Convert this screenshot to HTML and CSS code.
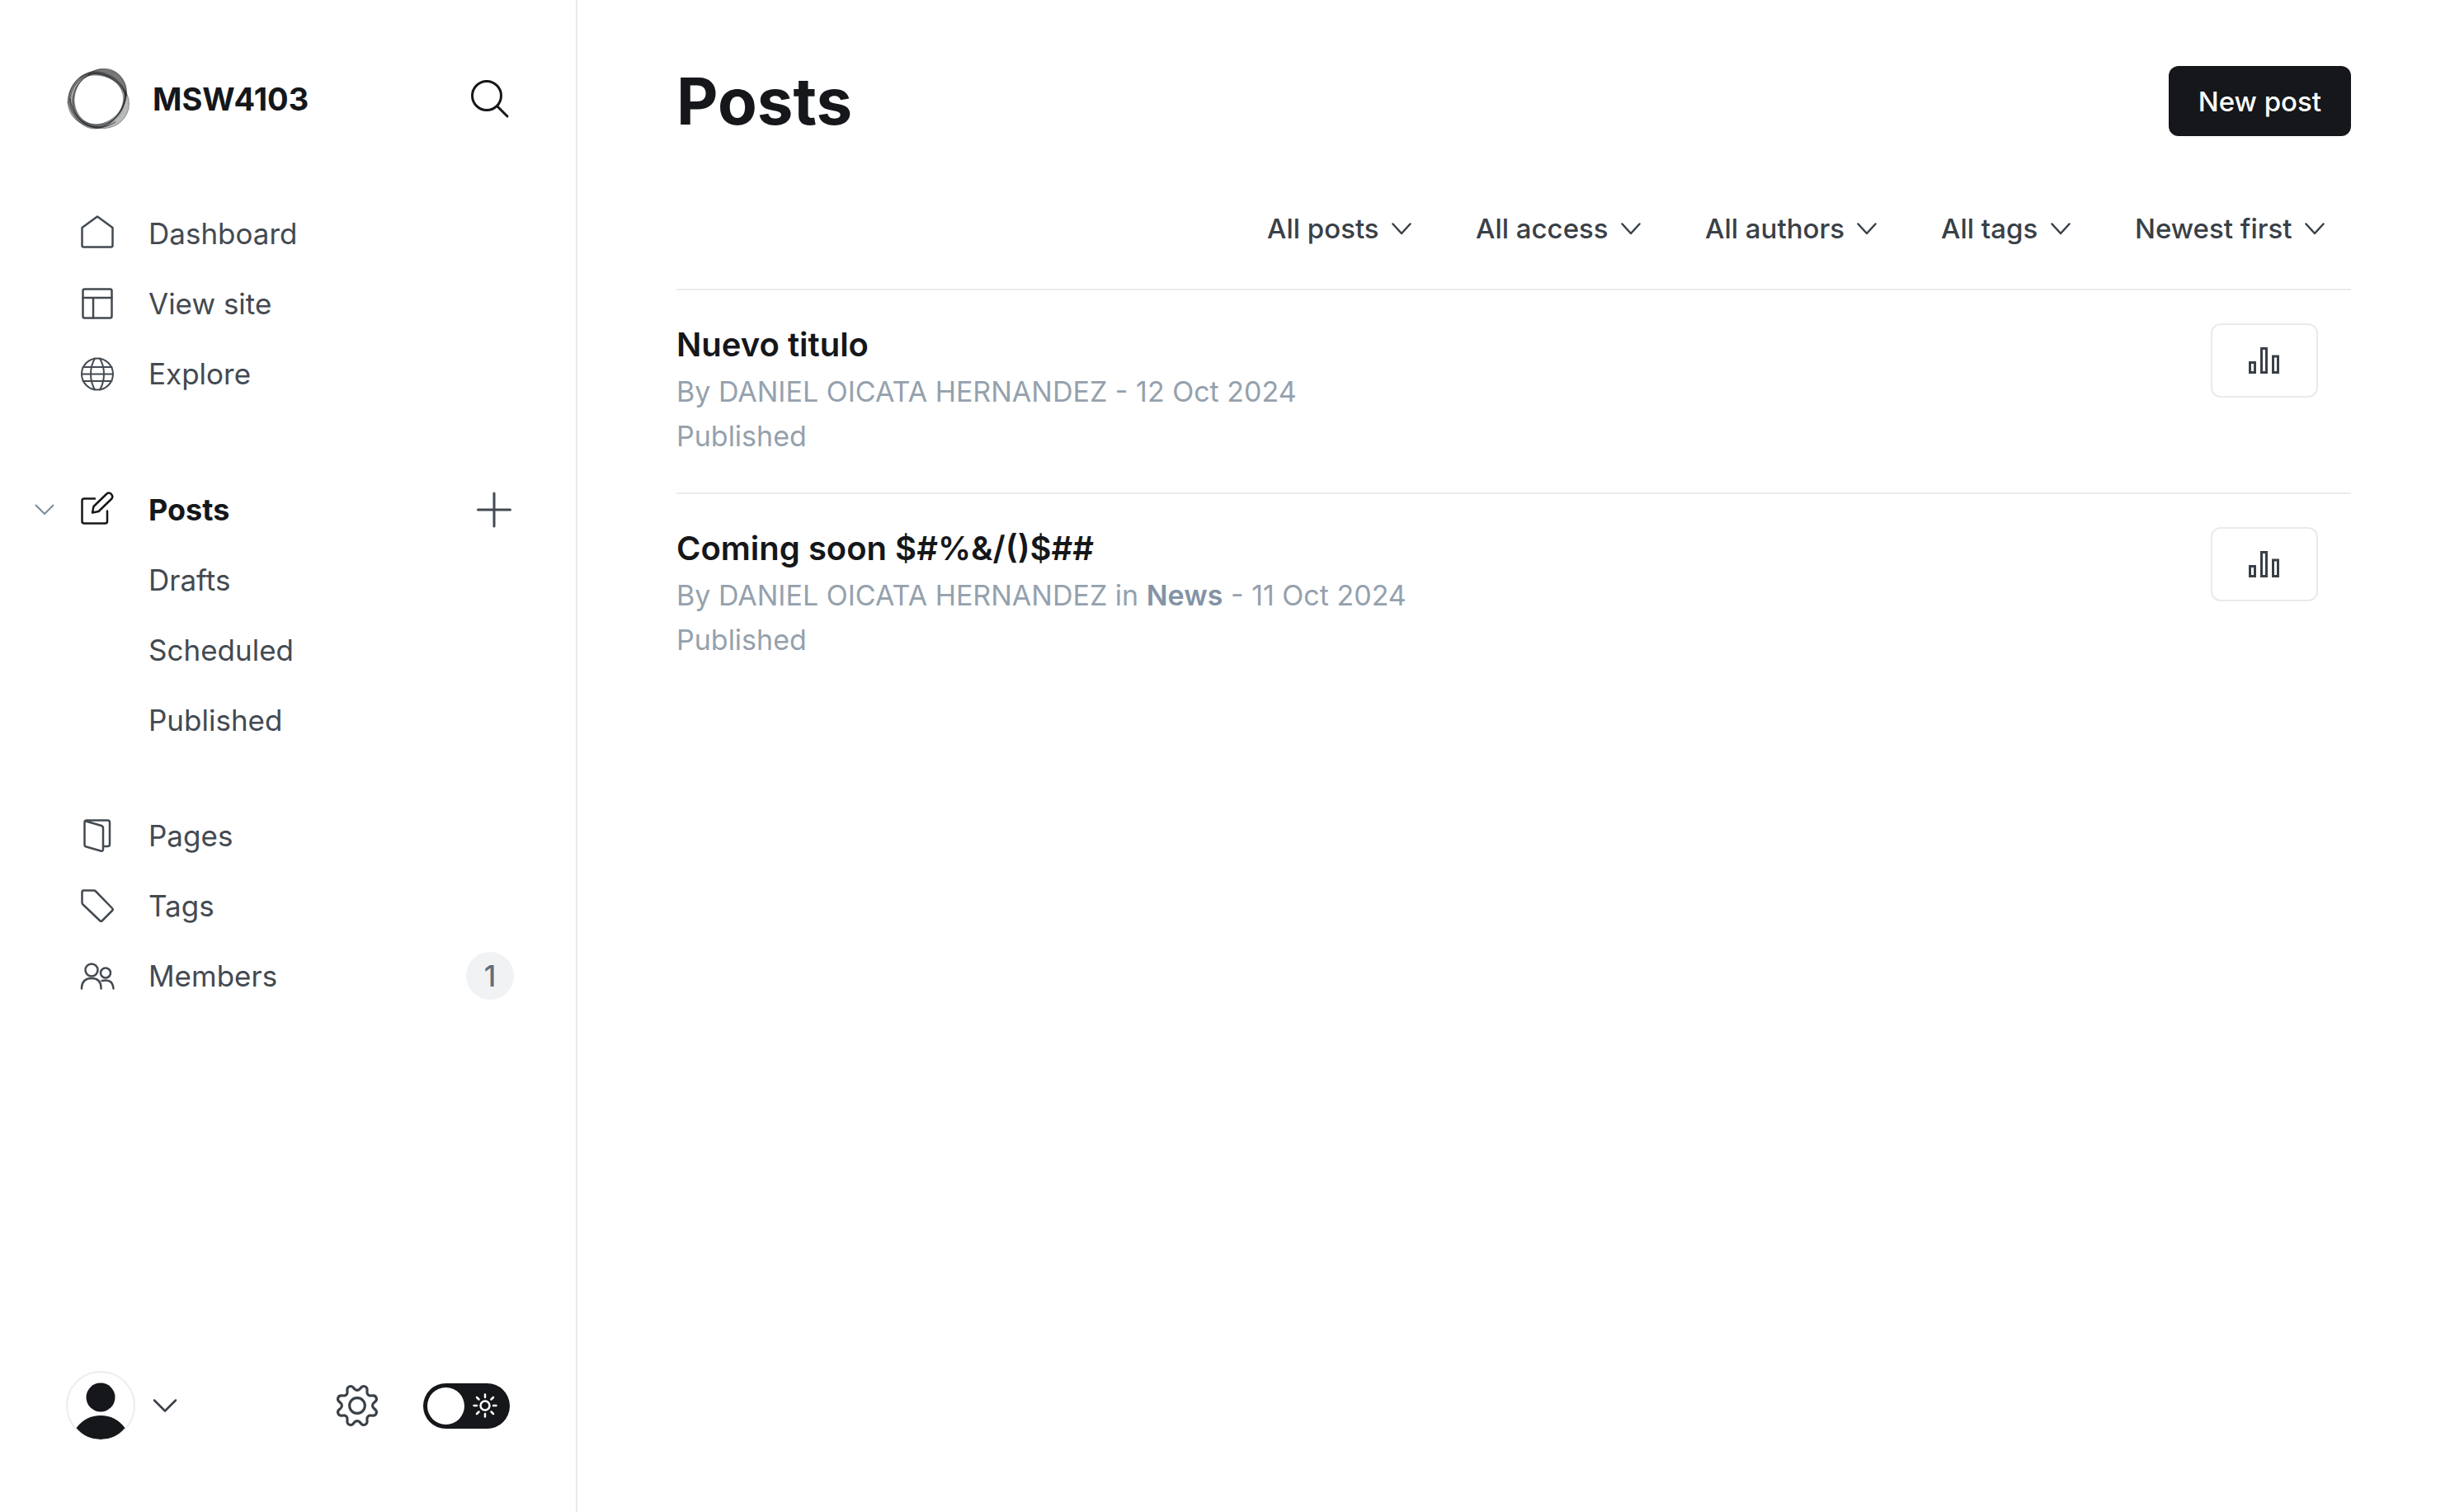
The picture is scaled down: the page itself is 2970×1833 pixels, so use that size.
FILE: index.html
```
<!DOCTYPE html>
<html lang="en">
<head>
<meta charset="utf-8">
<meta name="viewport" content="width=device-width, initial-scale=1">
<title>Posts - MSW4103</title>
<link rel="stylesheet" href="styles.css">
</head>
<body>
<div class="app">
  <aside class="sidebar">
    <header class="brand">
      <svg class="brand-logo" viewBox="0 0 80 80" aria-hidden="true">
        <g fill="#15171a" fill-rule="evenodd" stroke="#15171a" stroke-width="0.6" stroke-opacity="0.7">
          <path fill-opacity="0.4" d="M28 8C38 3 51 3 60 8C73 17 76 31 71 45C65 62 50 76 35 76C20 76 8 62 4 48C0 31 11 14 28 8ZM28 11C16 16 10 30 10 42C11 59 22 71 36 71C53 70 66 58 71 44C74 31 65 16 50 12C42 9 35 9 28 11Z"/>
          <path fill-opacity="0.3" d="M2 44C3 24 16 9 32 7C50 6 65 16 73 32C80 46 76 62 62 71C50 78 33 77 20 70C8 65 3 55 2 44ZM5 41C6 24 18 12 34 10C51 10 64 20 71 34C72 50 66 62 53 70C42 76 30 74 20 67C10 60 5 51 5 41Z"/>
          <path fill-opacity="0.3" d="M25 13C36 0 55 0 66 12C73 20 75 32 72 42C67 61 54 72 38 74C21 74 9 62 8 45C8 32 14 20 25 13ZM27 12C38 9 56 13 64 23C71 34 71 43 66 54C59 67 48 72 36 71C20 70 10 58 9 44C8 30 15 17 27 12Z"/>
        </g>
        <g fill="none" stroke="#15171a" stroke-width="1" stroke-opacity="0.7">
          <path d="M17 14C33 4 47 10 57 16C66 22 71 29 73 36"/>
          <path d="M5 40C7 55 17 68 29 73C39 77 50 74 60 68"/>
          <path d="M72 31C72 44 66 60 52 69"/>
        </g>
      </svg>
      <span class="brand-name">MSW4103</span>
      <button class="icon-button" type="button" aria-label="Search">
        <svg class="icon-search" viewBox="0 0 48 48" aria-hidden="true"><circle cx="20" cy="20" r="17.500"/><path d="M32.500 32.500L45 45"/></svg>
      </button>
    </header>

    <nav class="nav" aria-label="Main">
      <ul class="nav-group">
        <li class="nav-row"><a class="nav-link" href="#dashboard">
          <svg class="nav-icon" viewBox="0 0 44 44" aria-hidden="true"><path d="M22 1.500L40.500 15V36.500Q40.500 38.500 38.500 38.500H5.500Q3.500 38.500 3.500 36.500V15Z"/></svg>Dashboard</a></li>
        <li class="nav-row"><a class="nav-link" href="#site">
          <svg class="nav-icon" viewBox="0 0 44 44" aria-hidden="true"><rect x="4.500" y="4.500" width="35" height="35" rx="2"/><path d="M4.500 15H39.500M17 15V39.500"/></svg>View site</a></li>
        <li class="nav-row"><a class="nav-link" href="#explore">
          <svg class="nav-icon nav-icon-fine" viewBox="0 0 44 44" aria-hidden="true"><circle cx="22" cy="22.500" r="19"/><path d="M4.500 14H39.500M3 22.500H41M4.500 31H39.500M19 3.500Q14 12 14 22.500T19 41.500M25 3.500Q30 12 30 22.500T25 41.500"/></svg>Explore</a></li>
      </ul>

      <ul class="nav-group nav-group-posts">
        <li class="nav-row nav-row-open">
          <button class="collapse-button" type="button" aria-label="Collapse posts">
            <svg class="chevron chevron-light" viewBox="0 0 24 24" aria-hidden="true"><path d="M1.500 6.500L12 17L22.500 6.500"/></svg>
          </button>
          <a class="nav-link nav-link-active" href="#posts" aria-current="page">
          <svg class="nav-icon" viewBox="0 0 44 44" aria-hidden="true"><path d="M19 8.500H6Q3.500 8.500 3.500 11V36Q3.500 38.500 6 38.500H31.500Q34 38.500 34 36V23.500M16 25.500L17.500 18L33.500 2.500Q36 0.500 38.700 2.800Q41.500 5.500 39.500 8.500L23.500 24Z"/></svg>Posts</a>
          <button class="icon-button" type="button" aria-label="New post">
            <svg class="icon-plus" viewBox="0 0 48 48" aria-hidden="true"><path d="M24 4V44M4.500 24H43.500"/></svg>
          </button>
        </li>
        <li class="nav-row nav-row-sub"><a class="nav-link" href="#drafts">Drafts</a></li>
        <li class="nav-row nav-row-sub"><a class="nav-link" href="#scheduled">Scheduled</a></li>
        <li class="nav-row nav-row-sub"><a class="nav-link" href="#published">Published</a></li>
      </ul>

      <ul class="nav-group">
        <li class="nav-row"><a class="nav-link" href="#pages">
          <svg class="nav-icon" viewBox="0 0 44 44" aria-hidden="true"><path d="M8 4.500L27 10Q29 10.700 29 13V38.500Q29 41.500 26 40.500L8.500 35.500Q6.500 35 6.500 33V6Q6.500 3.500 9 3.500H34.500Q37 3.500 37 6V32.500Q37 35 34.500 35H29"/></svg>Pages</a></li>
        <li class="nav-row"><a class="nav-link" href="#tags">
          <svg class="nav-icon" viewBox="0 0 44 44" aria-hidden="true"><path d="M5.500 3.500H17.500Q19 3.500 20 4.500L40 25Q41.500 26.500 40 28L28 40Q26.500 41.500 25 40L4.500 20.500Q3.500 19.500 3.500 18V5.500Q3.500 3.500 5.500 3.500Z"/></svg>Tags</a></li>
        <li class="nav-row"><a class="nav-link" href="#members">
          <svg class="nav-icon" viewBox="0 0 44 44" aria-hidden="true"><circle cx="15" cy="15" r="7.500"/><circle cx="32" cy="18.500" r="6"/><path d="M3 37.500V36Q4 25 15 25T26.500 36V37.500M27.500 28Q40.500 25 41.500 37.500"/></svg>Members</a>
          <span class="badge">1</span></li>
      </ul>
    </nav>

    <footer class="account">
      <button class="account-button" type="button" aria-label="Account menu">
        <svg class="avatar" viewBox="0 0 84 84" aria-hidden="true"><defs><clipPath id="avatar-clip"><circle cx="42" cy="42" r="41"/></clipPath></defs><circle cx="42" cy="42" r="41" fill="#fff" stroke="#ebedef" stroke-width="2"/><g fill="#15171a" clip-path="url(#avatar-clip)"><circle cx="42" cy="32" r="17.500"/><path d="M12.500 69Q24 54 42 54T71.500 69Q60 83 42 83T12.500 69Z"/></g></svg>
        <svg class="account-chevron" viewBox="0 0 32 32" aria-hidden="true"><path d="M3 9.500L16 22.500L29 9.500"/></svg>
      </button>
      <a class="settings" href="#settings" aria-label="Settings">
        <svg class="icon-settings" viewBox="0 0 24 24" aria-hidden="true"><path d="M10.546 2.438a1.957 1.957 0 0 0 2.908 0L14.400 1.400a1.959 1.959 0 0 1 3.410 1.413l-.071 1.400A1.958 1.958 0 0 0 19.790 6.264l1.400-.071A1.959 1.959 0 0 1 22.600 9.600l-1.040.940a1.962 1.962 0 0 0 0 2.909l1.040.942a1.959 1.959 0 0 1-1.413 3.410l-1.400-.071a1.958 1.958 0 0 0-2.056 2.056l.071 1.400A1.959 1.959 0 0 1 14.400 22.600l-.941-1.041a1.959 1.959 0 0 0-2.908 0L9.600 22.600a1.959 1.959 0 0 1-3.410-1.413l.071-1.400a1.958 1.958 0 0 0-2.056-2.056l-1.400.071A1.958 1.958 0 0 1 1.400 14.400l1.041-.940a1.962 1.962 0 0 0 0-2.909L1.400 9.600a1.958 1.958 0 0 1 1.413-3.410l1.400.071a1.958 1.958 0 0 0 2.056-2.056L6.200 2.810A1.959 1.959 0 0 1 9.600 1.400z"/><circle cx="12" cy="12" r="4.500"/></svg>
      </a>
      <label class="theme">
        <input class="theme-input" type="checkbox" aria-label="Dark mode">
        <svg class="theme-sun" viewBox="0 0 30 30" aria-hidden="true"><circle cx="15" cy="15" r="5.500"/><path d="M15 1.500V5M15 25V28.500M1.500 15H5M25 15H28.500M5 5L7.500 7.500M22.500 22.500L25 25M5 25L7.500 22.500M22.500 7.500L25 5"/></svg>
      </label>
    </footer>
  </aside>

  <main class="main">
    <header class="page-header">
      <h1 class="page-title">Posts</h1>
      <button class="new-post" type="button">New post</button>
    </header>

    <div class="filters">
      <label class="filter"><select class="filter-select" aria-label="Post type"><option>All posts</option></select><svg class="chevron" viewBox="0 0 24 24" aria-hidden="true"><path d="M1.500 6.500L12 18L22.500 6.500"/></svg></label>
      <label class="filter"><select class="filter-select" aria-label="Access"><option>All access</option></select><svg class="chevron" viewBox="0 0 24 24" aria-hidden="true"><path d="M1.500 6.500L12 18L22.500 6.500"/></svg></label>
      <label class="filter"><select class="filter-select" aria-label="Author"><option>All authors</option></select><svg class="chevron" viewBox="0 0 24 24" aria-hidden="true"><path d="M1.500 6.500L12 18L22.500 6.500"/></svg></label>
      <label class="filter"><select class="filter-select" aria-label="Tag"><option>All tags</option></select><svg class="chevron" viewBox="0 0 24 24" aria-hidden="true"><path d="M1.500 6.500L12 18L22.500 6.500"/></svg></label>
      <label class="filter"><select class="filter-select" aria-label="Sort order"><option>Newest first</option></select><svg class="chevron" viewBox="0 0 24 24" aria-hidden="true"><path d="M1.500 6.500L12 18L22.500 6.500"/></svg></label>
    </div>

    <ul class="posts">
      <li class="post">
        <div class="post-text">
          <h2 class="post-title"><a class="post-link" href="#nuevo-titulo">Nuevo titulo</a></h2>
          <p class="post-meta">By DANIEL OICATA HERNANDEZ - 12 Oct 2024</p>
          <p class="post-meta">Published</p>
        </div>
        <button class="stats-button" type="button" aria-label="Analytics for Nuevo titulo">
          <svg class="icon-stats" viewBox="0 0 40 36" aria-hidden="true"><path d="M2.500 20.500H8.500V32.500H2.500ZM16.500 3.500H22.500V32.500H16.500ZM30.500 13H36.500V32.500H30.500Z"/></svg>
        </button>
      </li>
      <li class="post">
        <div class="post-text">
          <h2 class="post-title"><a class="post-link" href="#coming-soon">Coming soon $#%&amp;/()$##</a></h2>
          <p class="post-meta">By DANIEL OICATA HERNANDEZ in <strong class="post-tag">News</strong> - 11 Oct 2024</p>
          <p class="post-meta">Published</p>
        </div>
        <button class="stats-button" type="button" aria-label="Analytics for Coming soon">
          <svg class="icon-stats" viewBox="0 0 40 36" aria-hidden="true"><path d="M2.500 20.500H8.500V32.500H2.500ZM16.500 3.500H22.500V32.500H16.500ZM30.500 13H36.500V32.500H30.500Z"/></svg>
        </button>
      </li>
    </ul>
  </main>
</div>
</body>
</html>
```
FILE: styles.css
```
:root {
  --ink: #15171a;
  --slate: #394047;
  --muted: #95a1ad;
  --line: #ebebed;
}

* { box-sizing: border-box; }

body {
  margin: 0;
  background: #fff;
  color: var(--slate);
  font-family: Inter, "Liberation Sans", sans-serif;
  font-size: 35px;
}

button, select { font: inherit; color: inherit; }
button { padding: 0; border: 0; background: none; cursor: pointer; }
a { color: inherit; text-decoration: none; }
ul { margin: 0; padding: 0; list-style: none; }
svg { display: block; flex: none; fill: none; stroke: currentColor; stroke-linecap: round; stroke-linejoin: round; }

.app { display: flex; min-height: 100vh; }

/* Sidebar */
.sidebar {
  display: flex;
  flex: none;
  flex-direction: column;
  width: 700px;
  border-right: 2px solid var(--line);
}

.brand {
  display: flex;
  align-items: center;
  padding: 80px;
  color: var(--ink);
}
.brand-logo { width: 80px; height: 80px; stroke: none; }
.brand-name { flex: 1; margin-left: 25px; font-size: 38px; font-weight: 700; line-height: 48px; }

.icon-button { display: grid; width: 48px; height: 48px; place-items: center; color: inherit; }
.icon-search, .icon-plus { width: 48px; height: 48px; stroke-width: 3; }

.nav { color: #434a51; }
.nav-group { margin-bottom: 80px; }
.nav-group-posts { margin-bottom: 55px; }
.nav-row {
  display: flex;
  align-items: center;
  height: 85px;
  padding: 0 75px 0 96px;
}
.nav-row-open { padding-left: 42px; }
.nav-row-sub { padding-left: 180px; }
.nav-link { display: flex; flex: 1; align-items: center; gap: 40px; line-height: 48px; }
.nav-link-active { color: var(--ink); font-size: 36px; font-weight: 700; }
.nav-icon { width: 44px; height: 44px; stroke-width: 2.500; }
.nav-icon-fine { stroke-width: 2; }
.collapse-button { margin-right: 30px; color: #7c8b9a; }
.chevron { width: 24px; height: 24px; stroke-width: 2.500; pointer-events: none; }
.chevron-light { stroke-width: 2; }

.badge {
  display: grid;
  width: 58px;
  height: 58px;
  place-items: center;
  border-radius: 50%;
  background: #f1f2f4;
  color: #626d79;
  font-weight: 500;
}

.account {
  display: flex;
  align-items: center;
  margin-top: auto;
  padding: 40px 80px 87px 80px;
}
.account-button { display: flex; align-items: center; gap: 20px; }
.avatar { width: 84px; height: 84px; stroke: none; }
.account-chevron { width: 32px; height: 32px; stroke-width: 2.500; }
.settings { margin-left: auto; }
.icon-settings { width: 50px; height: 50px; overflow: visible; stroke-width: 1.500; }
.theme { position: relative; display: flex; margin-left: 55px; cursor: pointer; }
.theme-input {
  display: flex;
  align-items: center;
  width: 105px;
  height: 55px;
  margin: 0;
  padding: 5px;
  appearance: none;
  border-radius: 28px;
  background: var(--ink);
}
.theme-input::before {
  content: "";
  width: 45px;
  height: 45px;
  border-radius: 50%;
  background: #fff;
}
.theme-sun {
  position: absolute;
  top: 12px;
  right: 15px;
  width: 30px;
  height: 30px;
  color: #fff;
  stroke-width: 2.500;
}

/* Content */
.main { flex: 1; min-width: 0; padding: 80px 120px; }
.page-header { display: flex; align-items: center; justify-content: space-between; height: 85px; }
.page-title { margin: 0; color: var(--ink); font-size: 78px; font-weight: 700; line-height: 85px; }
.new-post {
  height: 85px;
  padding: 0 36px;
  border-radius: 12px;
  background: var(--ink);
  color: #fff;
  font-size: 33px;
  font-weight: 500;
}

.filters {
  display: flex;
  align-items: center;
  justify-content: flex-end;
  gap: 78px;
  height: 64px;
  margin: 80px 0 41px;
  padding-right: 32px;
}
.filter { display: flex; align-items: center; gap: 15px; }
.filter-select {
  padding: 0;
  appearance: none;
  border: 0;
  background: none;
  font-size: 33px;
  font-weight: 500;
  line-height: 48px;
}

.post {
  display: flex;
  align-items: flex-start;
  justify-content: space-between;
  padding: 40px 40px 41px 0;
  border-top: 2px solid var(--line);
}
.post-title { margin: 0 0 4px; color: var(--ink); font-size: 40px; font-weight: 600; line-height: 52px; }
.post-meta { margin: 0; color: var(--muted); font-size: 34px; line-height: 54px; }
.post-tag { color: #8393a5; font-weight: 600; }
.stats-button {
  display: grid;
  flex: none;
  width: 130px;
  height: 90px;
  place-items: center;
  border: 2px solid #e9eaeb;
  border-radius: 12px;
}
.icon-stats { width: 40px; height: 36px; stroke-width: 3; stroke-linejoin: miter; }
```
